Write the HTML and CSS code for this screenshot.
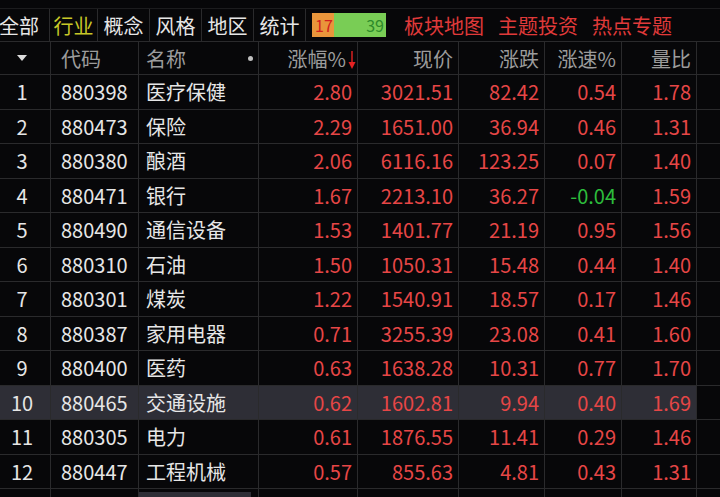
FILE: index.html
```html
<!DOCTYPE html>
<html lang="zh">
<head>
  <meta charset="UTF-8">
  <title>行业板块</title>
  <link rel="stylesheet" href="styles.css">
</head>
<body>
  <div class="tabs">
    <div class="tab first">全部</div>
    <div class="tab active">行业</div>
    <div class="tab">概念</div>
    <div class="tab">风格</div>
    <div class="tab">地区</div>
    <div class="tab">统计</div>
    <div class="ratio">
      <span class="up">17</span>
      <span class="down">39</span>
    </div>
    <a class="link">板块地图</a>
    <a class="link">主题投资</a>
    <a class="link">热点专题</a>
  </div>

  <div class="grid">
    <div class="row head">
      <div class="cell center"><span class="tri"></span></div>
      <div class="cell code">代码</div>
      <div class="cell name">名称<span class="dot"></span></div>
      <div class="cell num sort">涨幅%<svg class="arrow" width="8" height="20" viewBox="0 0 8 20"><path d="M4 1V17" stroke="#e52222" stroke-width="1.4"/><path d="M0.5 12L4 19L7.5 12Z" fill="#e52222"/></svg></div>
      <div class="cell num">现价</div>
      <div class="cell num">涨跌</div>
      <div class="cell num">涨速%</div>
      <div class="cell num">量比</div>
      <div class="cell"></div>
    </div>

    <div class="row"><div class="cell center">1</div><div class="cell code">880398</div><div class="cell name">医疗保健</div><div class="cell num red">2.80</div><div class="cell num red">3021.51</div><div class="cell num red">82.42</div><div class="cell num red">0.54</div><div class="cell num red">1.78</div><div class="cell"></div></div>
    <div class="row"><div class="cell center">2</div><div class="cell code">880473</div><div class="cell name">保险</div><div class="cell num red">2.29</div><div class="cell num red">1651.00</div><div class="cell num red">36.94</div><div class="cell num red">0.46</div><div class="cell num red">1.31</div><div class="cell"></div></div>
    <div class="row"><div class="cell center">3</div><div class="cell code">880380</div><div class="cell name">酿酒</div><div class="cell num red">2.06</div><div class="cell num red">6116.16</div><div class="cell num red">123.25</div><div class="cell num red">0.07</div><div class="cell num red">1.40</div><div class="cell"></div></div>
    <div class="row"><div class="cell center">4</div><div class="cell code">880471</div><div class="cell name">银行</div><div class="cell num red">1.67</div><div class="cell num red">2213.10</div><div class="cell num red">36.27</div><div class="cell num green">-0.04</div><div class="cell num red">1.59</div><div class="cell"></div></div>
    <div class="row"><div class="cell center">5</div><div class="cell code">880490</div><div class="cell name">通信设备</div><div class="cell num red">1.53</div><div class="cell num red">1401.77</div><div class="cell num red">21.19</div><div class="cell num red">0.95</div><div class="cell num red">1.56</div><div class="cell"></div></div>
    <div class="row"><div class="cell center">6</div><div class="cell code">880310</div><div class="cell name">石油</div><div class="cell num red">1.50</div><div class="cell num red">1050.31</div><div class="cell num red">15.48</div><div class="cell num red">0.44</div><div class="cell num red">1.40</div><div class="cell"></div></div>
    <div class="row"><div class="cell center">7</div><div class="cell code">880301</div><div class="cell name">煤炭</div><div class="cell num red">1.22</div><div class="cell num red">1540.91</div><div class="cell num red">18.57</div><div class="cell num red">0.17</div><div class="cell num red">1.46</div><div class="cell"></div></div>
    <div class="row"><div class="cell center">8</div><div class="cell code">880387</div><div class="cell name">家用电器</div><div class="cell num red">0.71</div><div class="cell num red">3255.39</div><div class="cell num red">23.08</div><div class="cell num red">0.41</div><div class="cell num red">1.60</div><div class="cell"></div></div>
    <div class="row"><div class="cell center">9</div><div class="cell code">880400</div><div class="cell name">医药</div><div class="cell num red">0.63</div><div class="cell num red">1638.28</div><div class="cell num red">10.31</div><div class="cell num red">0.77</div><div class="cell num red">1.70</div><div class="cell"></div></div>
    <div class="row selected"><div class="cell center">10</div><div class="cell code">880465</div><div class="cell name">交通设施</div><div class="cell num red">0.62</div><div class="cell num red">1602.81</div><div class="cell num red">9.94</div><div class="cell num red">0.40</div><div class="cell num red">1.69</div><div class="cell"></div></div>
    <div class="row"><div class="cell center">11</div><div class="cell code">880305</div><div class="cell name">电力</div><div class="cell num red">0.61</div><div class="cell num red">1876.55</div><div class="cell num red">11.41</div><div class="cell num red">0.29</div><div class="cell num red">1.46</div><div class="cell"></div></div>
    <div class="row"><div class="cell center">12</div><div class="cell code">880447</div><div class="cell name">工程机械</div><div class="cell num red">0.57</div><div class="cell num red">855.63</div><div class="cell num red">4.81</div><div class="cell num red">0.43</div><div class="cell num red">1.31</div><div class="cell"></div></div>
    <div class="row"><div class="cell"></div><div class="cell"></div><div class="cell name"><span class="hover">证券</span></div><div class="cell"></div><div class="cell"></div><div class="cell"></div><div class="cell"></div><div class="cell"></div><div class="cell"></div></div>
  </div>
</body>
</html>
```

FILE: styles.css
```css
body {
  margin: 0;
  width: 720px;
  height: 497px;
  overflow: hidden;
  background: #070709;
  font-family: "Noto Sans CJK SC", "Noto Sans", sans-serif;
  font-size: 20px;
  color: #e6e6e6;
}

.tabs {
  display: flex;
  align-items: center;
  margin-top: 8px;
  height: 32px;
  border-top: 1px solid #1c1c1e;
}

.tab {
  display: flex;
  align-items: center;
  justify-content: center;
  height: 100%;
  border-right: 1px solid #2a2a2c;
  box-sizing: border-box;
  color: #e6e6e6;
  width: 52px;
}

.tab.first {
  width: 50px;
  justify-content: flex-start;
  text-indent: -1px;
}

.tab.active {
  width: 48px;
  color: #c8c828;
}

.ratio {
  display: flex;
  margin-left: 6px;
  height: 24px;
  width: 74px;
  font-size: 16px;
  line-height: 24px;
}

.ratio .up {
  width: 22px;
  background: #e9953b;
  color: #d3201c;
  padding-left: 3px;
  box-sizing: border-box;
}

.ratio .down {
  flex: 1;
  background: #79cd55;
  color: #2d8a2a;
  text-align: right;
  padding-right: 2px;
}

.link {
  color: #e03a3a;
  margin-left: 14px;
}

.link:first-of-type {
  margin-left: 18px;
}

.grid {
  border-top: 1px solid #2a2a2c;
}

.row {
  display: grid;
  grid-template-columns: 51px 88px 120px 99px 101px 86px 77px 75px 23px;
  height: 34.5px;
  border-bottom: 1px solid #2a2a2c;
  box-sizing: border-box;
}

.row.head {
  height: 33px;
  color: #9c9c9c;
}

.cell {
  display: flex;
  align-items: center;
  border-right: 1px solid #2a2a2c;
  box-sizing: border-box;
  white-space: nowrap;
  overflow: hidden;
}

.cell:last-child {
  border-right: none;
}

.center {
  justify-content: center;
  padding-right: 6px;
}

.code {
  padding-left: 10px;
}

.name {
  padding-left: 7px;
  position: relative;
}

.num {
  justify-content: flex-end;
  padding-right: 5px;
}

.sort {
  padding-right: 1px;
}

.arrow {
  margin-left: 2px;
  margin-top: 4px;
}

.red {
  color: #e64646;
}

.green {
  color: #2dbd3c;
}

.tri {
  width: 0;
  height: 0;
  border-left: 5px solid transparent;
  border-right: 5px solid transparent;
  border-top: 6px solid #dcdcdc;
}

.dot {
  position: absolute;
  right: 5px;
  top: 14px;
  width: 5px;
  height: 5px;
  border-radius: 50%;
  background: #c0c0c0;
}

.row.selected .cell:not(:last-child) {
  background: #2e2e36;
}

.hover {
  align-self: flex-start;
  margin: 3px 0 0 -7px;
  padding: 2px 7px;
  width: 112px;
  box-sizing: border-box;
  background: #2e2e36;
  line-height: 30px;
}
```
